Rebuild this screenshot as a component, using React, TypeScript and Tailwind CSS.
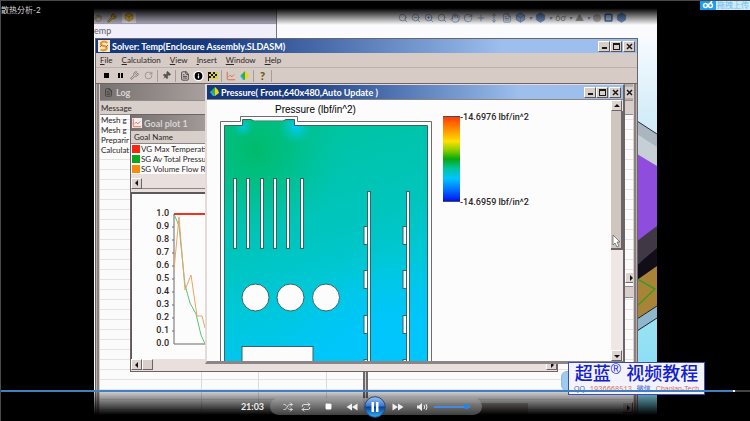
import type { ReactNode } from 'react';
import {
  Box, ChartLine, FileText, Hand, Info, MoveVertical, Pin, Plus, Repeat,
  RotateCw, Search, Shuffle, Square, Wrench, ZoomIn, ZoomOut,
} from 'lucide-react';

const messages = ['Mesh g', 'Mesh g', 'Preparir', 'Calculat'];

const goals = [
  { name: 'VG Max Temperati', color: 'bg-[#fb2412]' },
  { name: 'SG Av Total Pressu', color: 'bg-[#0aa81e]' },
  { name: 'SG Volume Flow R', color: 'bg-[#f98a0c]' },
];

const ticks = ['1.0', '0.9', '0.8', '0.7', '0.6', '0.5', '0.4', '0.3', '0.2', '0.1', '0.0'];
const slots = [234, 247, 261, 274, 287, 301];

export default function App() {
  return (
    <div className="relative flex h-screen w-full flex-col overflow-hidden border-t border-l border-[#4a4a4a] bg-black font-['Lato','Noto_Sans_CJK_SC',sans-serif] text-[9px] leading-none text-[#2c2728]">
      <h1 className="absolute top-1 left-0 text-[8px] leading-[10px] text-[#d8d8d8]">散热分析-2</h1>
      <UploadBadge />
      <main className="relative mr-[93px] ml-[93px] flex-1 overflow-hidden bg-[#fbfbfd]">
        <CadBackdrop />
        <SolverWindow />
        <div className="absolute inset-x-0 top-0 h-[24px] bg-linear-to-b from-black from-30% to-transparent" />
        <div className="absolute inset-x-0 bottom-0 h-[30px] bg-linear-to-t from-black from-20% to-black/15" />
      </main>
      <Watermark />
      <PlayerBar />
    </div>
  );
}

function UploadBadge() {
  return (
    <div className="absolute top-0 right-0 z-20 flex h-[9px] items-center bg-[#c9ebfb] text-[8px] text-[#74bde8]">
      <svg viewBox="0 0 16 9" className="h-[9px] w-4 bg-[#1b9df3]" fill="none" stroke="white" strokeWidth="1.5">
        <circle cx="5.500" cy="4.500" r="2" />
        <circle cx="10.500" cy="4.500" r="2" />
        <path d="M10 2.500 L12 0" />
      </svg>
      <span className="px-px leading-[9px]">拖拽上传</span>
    </div>
  );
}

function CadBackdrop() {
  const icon = 'size-[10px]';
  return (
    <>
      <div className="absolute top-0 left-0 w-[183px] border-r border-[#77747c] bg-[#f1effa]">
        <div className="flex h-[23px] items-end gap-[5px] border-b border-[#aaa6b8] bg-[#b4b1c2]">
          <Hand className="mb-px size-[8px] text-[#8a6b22]" />
          <Wrench className="size-[10px] fill-[#c9a93a] text-[#6a560f]" />
          <span className="flex bg-[#d7d5e2] px-[2px] pb-px">
            <Box className="size-[10px] fill-[#e0b94c] text-[#b98a18]" />
          </span>
        </div>
        <p className="h-[14px] leading-[13px] text-[#605c64]">emp</p>
      </div>
      <div className="absolute top-[11px] right-[30px] flex items-center gap-[3px] text-[#5f7fb4] opacity-80">
        <Search className={icon} />
        <ZoomOut className={icon} />
        <ZoomIn className={icon} />
        <Search className={icon} />
        <Hand className={icon} />
        <RotateCw className={icon} />
        <Plus className={icon} />
        <MoveVertical className={icon} />
        <FileText className={icon} />
        <Box className="size-[11px] fill-[#86aee2]" />
        <i className="text-[6px]">▾</i>
        <Box className="size-[11px] fill-[#4f83d6]" />
        <i className="text-[6px]">▾</i>
        <span className="text-[#777]">6ơ</span>
        <i className="text-[6px]">▾</i>
        <span className="text-[#888]">▲</span>
        <i className="text-[6px]">▾</i>
        <i className="size-2 rounded-full bg-[#aaa]" />
        <Square className="size-[9px] fill-[#a9c5ec] stroke-[4] text-[#214fa0]" />
        <Box className="size-[11px] fill-[#3c7bd0]" />
      </div>
      <svg viewBox="638 38 20 378" className="absolute top-[37px] right-0 h-[378px] w-5" preserveAspectRatio="none">
        <defs>
          <linearGradient id="sky" x1="0" y1="0" x2="0" y2="1">
            <stop offset="0" stopColor="#f6fbff" />
            <stop offset="0.2" stopColor="#d5edf8" />
            <stop offset="1" stopColor="#7fdcf3" />
          </linearGradient>
        </defs>
        <rect x="638" y="38" width="20" height="378" fill="url(#sky)" />
        <path d="M638 121 L658 134 V166 L638 154Z" fill="#a9b5bf" />
        <path d="M638 121 L658 134" stroke="#26303a" />
        <path d="M638 134 L658 147 V166 L638 154Z" fill="#c7cfd6" />
        <path d="M638 154 L658 166 V228 L638 241Z" fill="#8e4ddc" />
        <path d="M638 241 L658 226 V250 L638 265Z" fill="#403844" />
        <path d="M638 265 L658 248 V268 L638 282Z" fill="#120e18" />
        <path d="M638 280 L658 266 V306 L638 319Z" fill="#a98338" />
        <path d="M638 279 L656 289 L638 306" fill="none" stroke="#3d9a24" strokeWidth="1.500" />
        <path d="M638 319 L658 306 V318 L638 331Z" fill="#8fb6cc" />
        <path d="M638 319 L658 306 M638 331 L658 318" stroke="#17232c" />
      </svg>
    </>
  );
}

function SolverWindow() {
  return (
    <section className="absolute top-[37px] right-[19px] bottom-0 left-px flex flex-col border border-[#6d6468] bg-[#d7cbc6]">
      <header className="flex h-[14px] items-center bg-linear-to-r from-[#16387f] from-20% to-[#9cbfee] to-75% px-[2px] text-white">
        <SolverMark />
        <h2 className="flex-1 font-bold whitespace-nowrap">Solver: Temp(Enclosure Assembly.SLDASM)</h2>
        <WindowButtons />
      </header>
      <nav className="flex h-[15px] items-center gap-[9px] border-b border-[#bdb1ad] pl-1 text-[8px]">
        <MenuItem label="File" />
        <MenuItem label="Calculation" />
        <MenuItem label="View" />
        <MenuItem label="Insert" />
        <MenuItem label="Window" />
        <MenuItem label="Help" />
      </nav>
      <div className="flex h-[15px] items-center gap-[3px] pl-[5px]">
        <Tool label="Stop"><i className="size-[5px] bg-black" /></Tool>
        <Tool label="Pause"><i className="h-[5px] w-[5px] border-x-2 border-black" /></Tool>
        <Tool label="Restart"><Wrench className="size-[9px] text-[#6d6466]" /></Tool>
        <Tool label="Refresh"><RotateCw className="size-[9px] text-[#8d8486]" /></Tool>
        <Divider />
        <Tool label="Pin"><Pin className="size-[9px] rotate-45 fill-[#555] text-[#555]" /></Tool>
        <Divider />
        <Tool label="Log"><FileText className="size-[10px] text-[#333]" /></Tool>
        <Tool label="Info"><Info className="size-[12px] fill-black stroke-3 text-white" /></Tool>
        <Tool label="Goals"><CheckerFlag /></Tool>
        <Divider />
        <Tool label="Goal plot"><ChartLine className="size-[10px] text-[#d85c3c]" /></Tool>
        <Tool label="Preview"><Rainbow /></Tool>
        <Divider />
        <Tool label="Help"><b className="text-[11px] font-black text-[#6b5a00]">?</b></Tool>
        <Divider />
      </div>
      <div className="relative flex-1 border-t border-[#6d6468] bg-[#b9adaa]">
        <LogWindow />
        <GoalWindow />
        <PressureWindow />
      </div>
    </section>
  );
}

function SolverMark() {
  return (
    <svg viewBox="0 0 12 12" className="mr-[2px] size-[12px]" fill="none">
      <rect width="12" height="12" fill="#f6ead0" />
      <path d="M9.500 3 Q6 0 3 3 Q2.500 5.500 6 6 Q9.500 6.500 8.500 9 Q6 11.500 2.500 9.500" stroke="#e8942a" strokeWidth="2" />
      <path d="M2 7 L4 5 M8 7 L10 5" stroke="#d84a28" />
    </svg>
  );
}

function CheckerFlag() {
  return (
    <svg viewBox="0 0 10 10" className="size-[10px]">
      <rect x="1" y="1" width="9" height="7" fill="#e0d22a" />
      <path d="M1 1h2v2h-2z M5 1h2v2h-2z M3 3h2v2h-2z M7 3h2v2h-2z M1 5h2v2h-2z M5 5h2v2h-2z M0 1h1v9h-1z" fill="#17150a" />
    </svg>
  );
}

function MenuItem({ label }: { label: string }) {
  return (
    <button className="first-letter:underline">{label}</button>
  );
}

function Tool({ label, children }: { label: string; children: ReactNode }) {
  return (
    <button aria-label={label} className="flex h-3 w-[11px] items-center justify-center">{children}</button>
  );
}

function Divider() {
  return <i className="h-3 w-px bg-[#a89c99]" />;
}

function Rainbow() {
  return (
    <svg viewBox="0 0 10 10" className="size-[10px]">
      <path d="M5 0 L1 4 L3 8 L5 9Z" fill="#27b24a" />
      <path d="M5 0 L8 3 L9 6 L5 9Z" fill="#f4d21a" />
      <path d="M1 4 L0 5 L3 9 L5 9Z" fill="#2cb2e8" />
    </svg>
  );
}

function WindowButtons() {
  const btn = 'flex h-[11px] w-[12px] items-center justify-center border border-t-white border-r-[#5d5759] border-b-[#5d5759] border-l-white bg-[#d9cfca]';
  return (
    <div className="flex">
      <button aria-label="Minimize" className={btn}><i className="mt-1 h-[2px] w-[5px] bg-[#1c191a]" /></button>
      <button aria-label="Maximize" className={btn}><i className="size-[7px] border border-t-2 border-[#1c191a]" /></button>
      <button aria-label="Close" className={`${btn} ml-px`}><Cross /></button>
    </div>
  );
}

function Cross() {
  return (
    <svg viewBox="0 0 7 7" className="size-[7px]" stroke="#1c191a" strokeWidth="1.500">
      <path d="M1 1 L6 6 M6 1 L1 6" />
    </svg>
  );
}

const arrowPaths = {
  up: 'M1 5 L4 2 L7 5Z',
  down: 'M1 3 L4 6 L7 3Z',
  left: 'M5 1 L2 4 L5 7Z',
  right: 'M3 1 L6 4 L3 7Z',
};

function ArrowButton({ dir }: { dir: keyof typeof arrowPaths }) {
  return (
    <button aria-label={`Scroll ${dir}`} className="flex size-[11px] shrink-0 items-center justify-center border border-t-white border-r-[#6d6468] border-b-[#6d6468] border-l-white bg-[#ded4d0]">
      <svg viewBox="0 0 8 8" className="size-[8px]"><path d={arrowPaths[dir]} fill="#141213" /></svg>
    </button>
  );
}

function LogWindow() {
  return (
    <section className="absolute inset-y-0 right-px left-px flex flex-col border-x-2 border-[#898083] bg-[#d9cfca] px-px">
      <header className="flex h-4 items-center bg-linear-to-r from-[#77716f] to-[#b5adaa] to-25% pl-1 text-[#d9d4d3]">
        <FileText className="mr-[3px] size-[9px] text-[#3c3839]" />
        <h3 className="flex-1 font-bold">Log</h3>
        <button aria-label="Close log" className="flex h-[11px] w-2 items-center justify-center bg-[#d9cfca]"><Cross /></button>
      </header>
      <div className="relative flex-1 bg-[repeating-linear-gradient(to_bottom,#fcfbfb_0px,#fcfbfb_9px,#e6e2e2_9px,#e6e2e2_10px)]">
        <table className="w-full border-collapse text-left text-[8px]">
          <thead>
            <tr className="h-[14px] border-y border-[#958c8d] bg-[#d9cfca]">
              <th className="py-0 pl-px font-normal">Message</th>
            </tr>
          </thead>
          <tbody>
            {messages.map((m, i) => (
              <tr key={i} className="h-[10px]"><td className="p-0 pl-px leading-[10px]">{m}</td></tr>
            ))}
          </tbody>
        </table>
        <div className="absolute top-[172px] right-0 w-2 overflow-hidden"><ArrowButton dir="right" /></div>
        <div className="absolute top-[186px] right-0 h-3 w-2 border-y border-[#958c8d] bg-[#d9cfca]" />
        <div className="absolute inset-x-0 top-[271px] bottom-0 flex">
          <i className="w-[102px] border-r border-[#dedada]" />
          <i className="w-[57px] border-r border-[#dedada]" />
          <i className="w-[68px] border-r border-[#dedada]" />
          <i className="ml-[36px] w-[5px] border-x-2 border-[#6f686b] bg-[#d9cfca]" />
          <i className="mt-[31px] mr-[33px] flex-1 border-t border-white bg-[#c6bcb9]" />
          <i className="h-5 w-[36px] rounded-md border border-[#8fb8dc] bg-[#9dcbee]" />
          <span className="mt-[31px] ml-[25px]"><ArrowButton dir="right" /></span>
        </div>
      </div>
    </section>
  );
}

function GoalWindow() {
  return (
    <section className="absolute top-[30px] right-[79px] left-[34px] flex h-[258px] flex-col border border-[#6d6468] bg-[#e9e0de]">
      <header className="flex h-4 items-center bg-linear-to-r from-[#77716f] to-[#b5adaa] to-25% pl-px text-[#d9d4d3]">
        <ChartLine className="mr-[2px] size-[10px] bg-[#f3eeee] text-[#e0543c]" />
        <h3 className="font-bold">Goal plot 1</h3>
      </header>
      <table className="w-full border-collapse bg-[#fcfbfb] text-left text-[8px]">
        <thead>
          <tr className="h-3 border-b border-[#8d8486] bg-[#d9cfca]"><th className="py-0 pl-[3px] font-normal">Goal Name</th></tr>
        </thead>
        <tbody>
          {goals.map((g) => (
            <tr key={g.name} className="h-[10px]">
              <td className="p-0 pl-px">
                <span className="flex items-center gap-px leading-[10px] whitespace-nowrap">
                  <i className={`size-[8px] shrink-0 ${g.color}`} />{g.name}
                </span>
              </td>
            </tr>
          ))}
        </tbody>
      </table>
      <div className="mt-1 flex h-[11px] border-b border-[#8d8486]"><ArrowButton dir="left" /></div>
      <div className="mt-[3px] flex-1 border-t-2 border-l border-[#5f585b] bg-[#fdfcfc] pt-[13px]">
        <div className="flex">
          <ul className="w-[37px] text-right font-['Roboto',sans-serif] text-[9px] font-medium">
            {ticks.map((t) => <li key={t} className="h-[13px] leading-[13px]">{t}</li>)}
          </ul>
          <svg viewBox="170 207 40 143" className="ml-px h-[143px] w-10" fill="none">
            <path d="M174 214 V344 H206" stroke="#6c6668" />
            <path d="M172 227h2M172 240h2M172 253h2M172 266h2M172 279h2M172 292h2M172 305h2M172 318h2M172 331h2" stroke="#6c6668" />
            <path d="M174 214 L179 226 L185 285 L190 303 L196 314 L201 335 L205 344" stroke="#5cc479" />
            <path d="M174 270 L179 217 L185 290 L191 275 L197 316 L202 316 L205 328" stroke="#e9a468" />
            <path d="M174 214 H208" stroke="#ee3324" strokeWidth="2" />
          </svg>
        </div>
      </div>
      <div className="flex h-3 bg-[#e9e0de]">
        <ArrowButton dir="left" />
        <i className="size-[11px] border border-t-white border-r-[#6d6468] border-b-[#6d6468] border-l-white bg-[#d9cfca]" />
        <i className="flex-1" />
        <ArrowButton dir="right" />
      </div>
    </section>
  );
}

function PressureWindow() {
  return (
    <section className="absolute top-0 right-[12px] left-[109px] flex h-[280px] flex-col border-2 border-t border-b-[3px] border-[#e4dbd8] border-r-[#6d6468] border-b-[#8d8486] bg-[#fcfcfc]">
      <header className="flex h-[14px] items-center bg-linear-to-r from-[#16387f] from-20% to-[#9cbfee] to-75% pr-[2px] pl-[3px] text-white">
        <Rainbow />
        <h3 className="ml-px flex-1 font-bold whitespace-nowrap">Pressure( Front,640x480,Auto Update )</h3>
        <WindowButtons />
      </header>
      <div className="flex min-h-0 flex-1 border-t border-[#8d8486]">
        <figure className="ml-[9px] w-[220px] overflow-hidden font-['Liberation_Sans',sans-serif]">
          <figcaption className="mt-1 ml-[59px] h-[10px] text-[10px] leading-[11px] text-black">Pressure (lbf/in^2)</figcaption>
          <Board />
        </figure>
        <Legend />
        <div className="flex w-3 flex-col bg-[#efe7e5]">
          <ArrowButton dir="up" />
          <div className="flex h-[139px] flex-col justify-end border-r-2 border-b-2 border-[#6d6468] bg-[#cfc7be]">
            <svg viewBox="0 0 10 14" className="h-[14px] w-[10px]">
              <path d="M2 1 V11 L4 9 L6 13 L8 12 L6 8 L9 8Z" fill="white" stroke="#555" strokeWidth="0.700" />
            </svg>
          </div>
          <i className="flex-1" />
          <ArrowButton dir="down" />
        </div>
      </div>
    </section>
  );
}

function Board() {
  return (
    <svg viewBox="216 114 220 247" className="block h-[247px] w-[220px]">
      <defs>
        <linearGradient id="field" x1="0" y1="0" x2="0.25" y2="1">
          <stop offset="0" stopColor="#00c290" />
          <stop offset="0.25" stopColor="#00c4aa" />
          <stop offset="0.55" stopColor="#00c5bf" />
          <stop offset="0.75" stopColor="#00c8d8" />
          <stop offset="1" stopColor="#00c6f4" />
        </linearGradient>
        <radialGradient id="warm" gradientUnits="userSpaceOnUse" cx="255" cy="150" r="90">
          <stop offset="0" stopColor="#00bb6c" />
          <stop offset="0.4" stopColor="#00bd78" stopOpacity="0.7" />
          <stop offset="1" stopColor="#00c498" stopOpacity="0" />
        </radialGradient>
        <radialGradient id="jet" gradientUnits="userSpaceOnUse" cx="296" cy="127" r="17">
          <stop offset="0" stopColor="#00ccf8" />
          <stop offset="1" stopColor="#00c8c8" stopOpacity="0" />
        </radialGradient>
        <radialGradient id="jetLeft" gradientUnits="userSpaceOnUse" cx="243" cy="127" r="10">
          <stop offset="0" stopColor="#00c8d8" />
          <stop offset="1" stopColor="#00c8c8" stopOpacity="0" />
        </radialGradient>
        <radialGradient id="cold" gradientUnits="userSpaceOnUse" cx="390" cy="365" r="110">
          <stop offset="0" stopColor="#00c6ff" />
          <stop offset="0.4" stopColor="#00c6ff" stopOpacity="0.7" />
          <stop offset="1" stopColor="#00c6ff" stopOpacity="0" />
        </radialGradient>
      </defs>
      <path d="M220.500 365 V121.500 H240.500 V116.500 H297.500 V121.500 H431.500 V365Z" fill="#fcfcfc" stroke="#6f6a6c" />
      <g stroke="#3d6264">
        <path d="M224.500 365 V125.500 H242.500 V119.500 H251 L254 121 H283 L286 119.500 H294.500 V125.500 H427.500 V365Z" fill="url(#field)" />
        <path d="M225 365 V126 H243 V121 H294 V126 H427 V365Z" fill="url(#warm)" stroke="none" />
        <rect x="225" y="240" width="202" height="125" fill="url(#cold)" stroke="none" />
        <path d="M278 121 H294 V126 H315 V146 H278Z" fill="url(#jet)" stroke="none" />
        <path d="M232 126 H243 V121 H254 V140 H232Z" fill="url(#jetLeft)" stroke="none" />
        {slots.map((x) => (
          <rect key={x} x={x - 0.5} y="178.500" width="3" height="70" fill="#f2fbfa" />
        ))}
        {[255.5, 290.5, 326].map((cx) => (
          <circle key={cx} cx={cx} cy="297.500" r="13.500" fill="#fcfcfc" />
        ))}
        <rect x="242" y="346.500" width="71" height="20" fill="#fcfcfc" />
        {[0, 39].map((dx) => (
          <g key={dx} transform={`translate(${dx} 0)`} fill="#f2fbfa">
            <rect x="367.500" y="191.500" width="3" height="175" />
            {[226.5, 270.5, 315.5, 359.5].map((y) => (
              <rect key={y} x="364" y={y} width="3.500" height="18" />
            ))}
          </g>
        ))}
      </g>
    </svg>
  );
}

function Legend() {
  return (
    <div className="flex flex-1 pt-[11px] pl-[7px] font-['Roboto',sans-serif] text-[9px] font-medium">
      <div className="mt-[5px] h-[86px] w-[17px] border-y border-[#4d4a5a] bg-[linear-gradient(to_bottom,#ff3c08,#ff8a00_14%,#ffdf00_29%,#8fd000_39%,#08a80c_50%,#00c49a_61%,#00c4ff_73%,#0074ff_86%,#0014ee)]" />
      <div className="flex h-[97px] flex-col justify-between leading-[12px] whitespace-nowrap">
        <span>-14.6976 lbf/in^2</span>
        <span>-14.6959 lbf/in^2</span>
      </div>
    </div>
  );
}

function Watermark() {
  return (
    <aside className="absolute right-[45px] bottom-[26px] h-[33px] w-[137px] border border-[#3d4ab8] bg-[#f2f3fc] text-center font-['Liberation_Sans','Noto_Sans_CJK_SC',sans-serif] whitespace-nowrap">
      <p className="text-[18px] leading-[22px] font-medium text-[#1420cc]">
        超蓝<sup className="top-[-6px] text-[14px]">®</sup> 视频教程
      </p>
      <p className="flex justify-center gap-[5px] text-[7px] leading-[8px] text-[#dd6a50]">
        <span className="text-[#5a64a8]">QQ</span>
        <span className="font-['Liberation_Mono',monospace]">1936668513</span>
        <span className="text-[#4658c8]">微信</span>
        <span>Chaolan-Tech</span>
      </p>
    </aside>
  );
}

function PlayerBar() {
  const icon = 'size-[10px] text-[#eeeeee]';
  return (
    <footer className="absolute inset-x-0 bottom-0 z-10 flex h-[31px] flex-col">
      <input
        type="range"
        aria-label="Seek"
        defaultValue={98}
        className="block h-[2px] w-full appearance-none bg-linear-to-r from-[#3f7fc4] from-98% to-[#444] to-98% [&::-webkit-slider-thumb]:size-[2px] [&::-webkit-slider-thumb]:appearance-none [&::-webkit-slider-thumb]:bg-white"
      />
      <div className="mt-[3px] flex h-[23px] items-center justify-center gap-[6px] pr-[28px]">
        <time className="text-[9px] font-bold text-[#eeeeee]">21:03</time>
        <div className="flex h-[17px] w-[212px] items-center rounded-full bg-linear-to-b from-[#a2a2a2]/80 to-[#505050]/80 pr-3 pl-[13px]">
          <button aria-label="Shuffle"><Shuffle className={icon} /></button>
          <button aria-label="Repeat" className="ml-2"><Repeat className={icon} /></button>
          <button aria-label="Stop" className="ml-[14px]"><Square className="size-[7px] fill-white text-white" /></button>
          <button aria-label="Rewind" className="ml-[14px]"><Skip /></button>
          <button aria-label="Pause" className="ml-[6px]"><PauseDisc /></button>
          <button aria-label="Fast forward" className="ml-[6px]"><span className="block rotate-180"><Skip /></span></button>
          <button aria-label="Mute" className="ml-[12px]">
            <svg viewBox="0 0 12 10" className="h-[10px] w-3" fill="#eee" stroke="#eee">
              <path d="M1 3.500 H3 L6 1 V9 L3 6.500 H1Z" stroke="none" />
              <path d="M8 3 Q9.500 5 8 7 M10 2 Q12 5 10 8" fill="none" />
            </svg>
          </button>
          <input
            type="range"
            aria-label="Volume"
            defaultValue={95}
            className="ml-[6px] h-[2px] w-0 min-w-0 flex-1 appearance-none bg-[#3f8ce0] [&::-webkit-slider-thumb]:size-[5px] [&::-webkit-slider-thumb]:appearance-none [&::-webkit-slider-thumb]:rounded-full [&::-webkit-slider-thumb]:bg-[#2384ee]"
          />
        </div>
      </div>
    </footer>
  );
}

function Skip() {
  return (
    <svg viewBox="0 0 12 8" className="h-2 w-3" fill="#f2f2f2">
      <path d="M6 0.500 V7.500 L0.500 4Z M11.500 0.500 V7.500 L6 4Z" />
    </svg>
  );
}

function PauseDisc() {
  return (
    <svg viewBox="0 0 22 22" className="size-[22px]">
      <defs>
        <linearGradient id="disc" x1="0" y1="0" x2="0" y2="1">
          <stop offset="0" stopColor="#9cc4ee" />
          <stop offset="0.45" stopColor="#3a78cc" />
          <stop offset="0.5" stopColor="#0d3f9c" />
          <stop offset="1" stopColor="#2eb4f8" />
        </linearGradient>
      </defs>
      <circle cx="11" cy="11" r="10.300" fill="url(#disc)" stroke="#27487c" />
      <path d="M7.500 6 H10 V16 H7.500Z M12 6 H14.500 V16 H12Z" fill="white" />
    </svg>
  );
}
